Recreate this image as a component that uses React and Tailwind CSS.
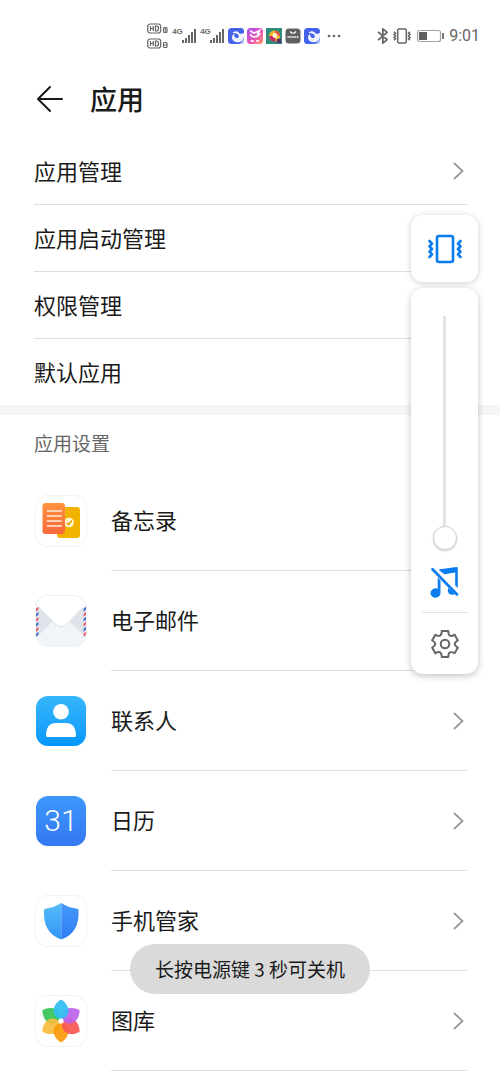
import React from 'react'
import { Bluetooth } from 'lucide-react'

const manageItems = ['应用管理', '应用启动管理', '权限管理', '默认应用']

const Chevron = () => (
  <svg className="mr-0.5 w-3 h-5 shrink-0" viewBox="0 0 12 20" fill="none" stroke="#999" strokeWidth="1.8" aria-hidden="true">
    <path d="M1 2l8.500 8L1 18" />
  </svg>
)

// status bar pieces
const HdBadge = () => (
  <svg className="w-[22px] h-7" viewBox="0 0 22 28" fill="none" stroke="#666" aria-hidden="true">
    {[0, 15].map((y, i) => (
      <g key={y} transform={`translate(1 ${y + 1})`}>
        <rect x="0.7" y="1" width="13" height="9" rx="2.5" strokeWidth="1.2" />
        <path d="M3.5 3v5M6.3 3v5M3.5 5.5h2.8M8.5 3v5h1q2 0 2-2.5t-2-2.5z" strokeWidth="1.2" />
        <rect x="16.5" y="4.500" width="3.5" height="5" rx="1" strokeWidth="1.200" />
        {i === 0 ? <path d="M18.3 5v4" strokeWidth="1" /> : <path d="M16.5 7h3.5" strokeWidth="1" />}
      </g>
    ))}
  </svg>
)

const Signal = () => (
  <div className="flex w-6 h-4 items-start">
    <span className="w-[10px] font-['Liberation_Sans',sans-serif] text-[8px] leading-[8px] font-bold text-[#666]">4G</span>
    <svg className="w-[14px] h-4 shrink-0" viewBox="0 0 14 16" fill="#666" aria-hidden="true">
      <rect x="0" y="12" width="2" height="3" />
      <rect x="3" y="10" width="2" height="5" />
      <rect x="6" y="7" width="2" height="8" />
      <rect x="9" y="4" width="2" height="11" />
      <rect x="12" y="1" width="2" height="14" />
    </svg>
  </div>
)

const BirdApp = () => (
  <svg className="w-4 h-4" viewBox="0 0 16 16" aria-hidden="true">
    <rect width="16" height="16" rx="3.5" fill="#4463ea" />
    <path d="M4.500 5C6 2.800 10 2.600 11.500 5.500c1.500.6 3 .3 4.500-.8V9c-.5 3-2.500 5-5.500 5.300C7 14.500 4 12.500 4 9.500c0-1.700.8-3 2.200-3.500-.2 2 .5 3.500 2.300 4 1.500.3 2.500-.6 2.300-2C10.500 6 7.500 4.800 4.500 5z" fill="#eef3ff" />
    <path d="M16 10v2.500Q16 16 12.500 16H11c2.500-1 4.300-3 5-6z" fill="#c9d5fb" />
  </svg>
)

const StatusApps = () => (
  <div className="flex items-center gap-[3px]">
    <BirdApp />
    <svg className="w-4 h-4" viewBox="0 0 16 16" aria-hidden="true">
      <defs>
        <linearGradient id="pink" x1="0" y1="0" x2="1" y2="1">
          <stop offset="0" stopColor="#a64cf0" />
          <stop offset="0.6" stopColor="#ee56b4" />
          <stop offset="1" stopColor="#ff9a5c" />
        </linearGradient>
      </defs>
      <rect width="16" height="16" rx="3.5" fill="url(#pink)" />
      <path d="M3.500 3l3.500 2.200 5.500-2.700-2 3.500M3.500 6.500C5 10 11 9.500 13 5.500" stroke="#fff" strokeWidth="1.6" fill="none" strokeLinecap="round" />
      <path d="M3.500 13h3.500M9 13h3" stroke="#fff" strokeWidth="1.500" fill="none" />
    </svg>
    <svg className="w-4 h-4" viewBox="0 0 16 16" aria-hidden="true">
      <rect width="16" height="16" fill="#2d8c7c" />
      <circle cx="8.500" cy="8" r="5.500" fill="#f0b92f" />
      <path d="M3 8a5.500 5.500 0 0 0 7 5.300L8.500 8z" fill="#c02a6a" />
      <path d="M9 2.500a5.500 5.500 0 0 1 5 5.500L9 8z" fill="#e8503a" />
      <circle cx="9" cy="7.500" r="2.500" fill="#fff3c9" />
      <path d="M11 11h4v4h-4z" fill="#5c2d6e" />
    </svg>
    <svg className="w-4 h-4" viewBox="0 0 16 16" aria-hidden="true">
      <rect x="0.500" y="0.500" width="15" height="15" rx="3.500" fill="#606060" />
      <path d="M5 3.500q3 3.500 6 0" stroke="#fff" strokeWidth="1.200" fill="none" />
      <path d="M2.500 9h11" stroke="#e5e5e5" strokeWidth="2" strokeDasharray="1.300 .6" />
    </svg>
    <BirdApp />
  </div>
)

const StatusBar = () => (
  <div className="flex h-[60px] items-center justify-end gap-8 pt-3 pr-5">
    <div className="flex items-center gap-1">
      <HdBadge />
      <Signal />
      <Signal />
      <StatusApps />
      <svg className="w-5 h-4" viewBox="0 0 20 16" fill="#666" aria-hidden="true">
        <circle cx="5" cy="8" r="1.300" />
        <circle cx="10" cy="8" r="1.300" />
        <circle cx="15" cy="8" r="1.300" />
      </svg>
    </div>
    <div className="flex items-center gap-1">
      <Bluetooth className="w-3 h-4 text-[#666]" viewBox="4 1 14 22" strokeWidth={2} preserveAspectRatio="none" aria-hidden="true" />
      <svg className="w-5 h-4" viewBox="0 0 36 30" fill="none" stroke="#666" strokeWidth="2.800" aria-hidden="true">
        <rect x="10" y="2" width="16" height="26" rx="2" />
        <path d="M3 7l3 2.700-3 2.700 3 2.600-3 2.700 3 2.600-3 2.700M33 7l-3 2.700 3 2.700-3 2.600 3 2.700-3 2.600 3 2.700" />
      </svg>
      <svg className="w-[29px] h-4" viewBox="2 0 29 16" aria-hidden="true">
        <rect x="3.500" y="2.500" width="23" height="11" rx="2" fill="none" stroke="#a3a3a3" strokeWidth="1.200" />
        <rect x="5" y="4" width="8" height="8" fill="#606060" />
        <rect x="28" y="5" width="2" height="6" fill="#777" />
      </svg>
      <span className="font-['Roboto',sans-serif] text-base leading-5 text-[#666]">9:01</span>
    </div>
  </div>
)

// app icons, all drawn on a 50x50 tile
const NotesIcon = () => (
  <svg className="w-full h-full" viewBox="0 0 50 50" aria-hidden="true">
    <defs>
      <linearGradient id="notes" x1="0" y1="0" x2="0" y2="1">
        <stop offset="0" stopColor="#ff9440" />
        <stop offset="1" stopColor="#f9683a" />
      </linearGradient>
    </defs>
    <rect x="21" y="11" width="23" height="31" rx="3" fill="#f2b300" />
    <circle cx="33" cy="26.500" r="4.800" fill="#fff6d8" />
    <path d="M30.800 26.700l1.800 1.900 3.300-4" stroke="#e8a400" strokeWidth="1.500" fill="none" />
    <rect x="6.500" y="7" width="22.500" height="31" rx="3" fill="url(#notes)" />
    <path d="M11.300 15h14M11.300 20h14M11.300 25h14M11.300 30h14" stroke="#ffe9da" strokeWidth="1.500" strokeLinecap="round" />
  </svg>
)

const MailIcon = () => (
  <svg className="w-full h-full" viewBox="0 0 50 50" aria-hidden="true">
    <rect width="50" height="50" fill="#dfe4eb" />
    <path d="M0 42L17 25h16l17 17v8H0z" fill="#f1f5f9" />
    <path d="M0 0h50v8.500L30 29q-5 4.500-10 0L0 8.500z" fill="#dce1e8" />
    <path d="M0 0h50v8L30 28q-5 4.500-10 0L0 8z" fill="#fff" />
    <rect y="10" width="2.500" height="30" fill="#fff" />
    <rect x="47.500" y="10" width="2.500" height="30" fill="#fff" />
    {[11, 21, 31].map((y) => (
      <g key={y}>
        <path d={`M0 ${y + 1.5}l2.500-2v3.500l-2.500 2z`} fill="#e26a7c" />
        <path d={`M0 ${y + 6.500}l2.500-2v3.500l-2.500 2z`} fill="#4f76cf" />
        <path d={`M47.500 ${y + 1.5}l2.500-2v3.500l-2.500 2z`} fill="#4f76cf" />
        <path d={`M47.500 ${y + 6.500}l2.500-2v3.500l-2.500 2z`} fill="#e26a7c" />
      </g>
    ))}
  </svg>
)

const ContactsIcon = () => (
  <svg className="w-full h-full" viewBox="0 0 50 50" fill="#fff" aria-hidden="true">
    <circle cx="25" cy="15.800" r="7.800" />
    <path d="M10 39.500C10 31 14 27 20 27h10c6 0 10 4 10 12.500q0 1.500-1.500 1.500h-27Q10 41 10 39.500z" />
  </svg>
)

const ShieldIcon = () => (
  <svg className="w-full h-full" viewBox="0 0 50 50" aria-hidden="true">
    <defs>
      <linearGradient id="shieldL" x1="0" y1="0" x2="0" y2="1">
        <stop offset="0" stopColor="#55bcf8" />
        <stop offset="1" stopColor="#3296f6" />
      </linearGradient>
      <linearGradient id="shieldR" x1="0" y1="0" x2="0" y2="1">
        <stop offset="0" stopColor="#4698f6" />
        <stop offset="1" stopColor="#2f7df6" />
      </linearGradient>
    </defs>
    <path d="M25.300 7Q17 12 9.300 12.700 8 13 8 14.500C7.500 29 12 38.500 25.300 43.500z" fill="url(#shieldL)" />
    <path d="M25.300 7Q33 12 41.300 12.700q1.300.3 1.300 1.800C43 29 38.500 38.500 25.300 43.500z" fill="url(#shieldR)" />
  </svg>
)

const petals = [
  [300, '#36c35a'],
  [240, '#f7bd3f'],
  [180, '#fb9a0c'],
  [120, '#f9564f'],
  [60, '#bb62ea'],
  [0, '#30bdf2'],
]

const GalleryIcon = () => (
  <svg className="w-full h-full" viewBox="0 0 50 50" aria-hidden="true">
    {petals.map(([angle, color]) => (
      <path
        key={angle}
        transform={`translate(25 25) rotate(${angle})`}
        d="M0-21.500C4.500-19 7.500-14.500 7.500-10.500 7.500-5.500 3.500-2 0-2S-7.500-5.500-7.500-10.500C-7.500-14.500-4.500-19 0-21.500z"
        fill={color}
        fillOpacity="0.92"
      />
    ))}
    <circle cx="25" cy="25" r="2.600" fill="#fff" />
  </svg>
)

const apps = [
  { name: '备忘录', tile: 'bg-white ring-1 ring-[#f3f3f3]', icon: <NotesIcon /> },
  { name: '电子邮件', tile: 'bg-white ring-1 ring-[#f3f3f3]', icon: <MailIcon /> },
  { name: '联系人', tile: 'bg-linear-to-b from-[#35b6fb] to-[#0397fb]', icon: <ContactsIcon /> },
  {
    name: '日历',
    tile: 'bg-linear-to-b from-[#3d97fa] to-[#3577f3]',
    icon: <span className="font-['Roboto',sans-serif] text-3xl font-light text-white">31</span>,
  },
  { name: '手机管家', tile: 'bg-white ring-1 ring-[#f3f3f3]', icon: <ShieldIcon /> },
  { name: '图库', tile: 'bg-white ring-1 ring-[#f3f3f3]', icon: <GalleryIcon /> },
]

const GearIcon = () => (
  <svg className="block size-[30px]" viewBox="-15 -15 30 30" fill="none" stroke="#666" strokeWidth="2" strokeLinecap="round" strokeLinejoin="round" aria-hidden="true">
    {[0, 60, 120, 180, 240, 300].map((angle) => (
      <path key={angle} transform={`rotate(${angle})`} d="M-3.200-12.900H3.200C3.500-8 5.200-7 9.600-9.200" />
    ))}
    <circle r="4.300" />
  </svg>
)

const VolumePanel = () => (
  <aside className="absolute top-[215px] right-[22px] flex w-[67px] flex-col gap-1.5">
    <button
      type="button"
      aria-label="振动"
      className="flex h-[67px] items-center justify-center rounded-xl bg-white shadow-[0_1px_6px_rgba(0,0,0,0.2)]"
    >
      <svg className="w-9 h-[30px]" viewBox="0 0 36 30" fill="none" stroke="#0a7cf0" strokeWidth="2.600" strokeLinejoin="round" strokeLinecap="round" aria-hidden="true">
        <rect x="10" y="2" width="16" height="26" rx="2" />
        <path d="M2.500 7l2.500 2.700-2.500 2.700 2.500 2.600-2.500 2.700 2.500 2.600-2.500 2.700M33.500 7l-2.500 2.700 2.500 2.700-2.500 2.600 2.500 2.700-2.500 2.600 2.500 2.700" />
      </svg>
    </button>
    <div className="flex flex-col items-center gap-4 rounded-xl bg-white pt-7 pb-[15px] shadow-[0_2px_7px_rgba(0,0,0,0.24)]">
      <input
        type="range"
        min="0"
        max="100"
        defaultValue="0"
        aria-label="媒体音量"
        className="m-0 h-[234px] w-6 appearance-none bg-[linear-gradient(#e4e4e4,#e4e4e4)] bg-[length:3px_100%] bg-center bg-no-repeat [writing-mode:vertical-lr] [direction:rtl] [&::-webkit-slider-thumb]:size-6 [&::-webkit-slider-thumb]:appearance-none [&::-webkit-slider-thumb]:rounded-full [&::-webkit-slider-thumb]:border [&::-webkit-slider-thumb]:border-[#d2d2d2] [&::-webkit-slider-thumb]:bg-white [&::-webkit-slider-thumb]:shadow-[0_1px_2px_rgba(0,0,0,0.2)]"
      />
      <button type="button" aria-label="静音">
        <svg className="block size-[30px] overflow-visible" viewBox="0 0 30 30" fill="#0a7cf0" aria-hidden="true">
          <path d="M9 4.200Q9 3.500 10 3.300L26.500 1q1.300-.1 1.300 1.200V22L25.200 19.400V6.500L14.500 8.200z" />
          <path d="M7.700 11.500l2.800 2.900V27a5 4.700 0 1 1-2.800-4.200z" />
          <path d="M18.500 22l6.500 6.300q-3.800 1.200-6-.8-2.200-2.500-.5-5.500z" />
          <path d="M2.500 3.300l24.500 25.200" stroke="#0a7cf0" strokeWidth="2.700" strokeLinecap="round" />
        </svg>
      </button>
      <div className="h-px w-[46px] bg-[#e2e2e2]" />
      <button type="button" aria-label="设置">
        <GearIcon />
      </button>
    </div>
  </aside>
)

const App = () => {
  return (
    <div className="relative min-h-screen bg-white font-['Noto_Sans_CJK_SC',sans-serif] text-[#1a1a1a]">
      <StatusBar />

      <header className="flex h-[78px] items-center gap-[26px] pl-9">
        <button type="button" aria-label="返回">
          <svg className="block size-7" viewBox="0 0 28 28" fill="none" stroke="#1a1a1a" strokeWidth="2" strokeLinecap="round" strokeLinejoin="round" aria-hidden="true">
            <path d="M26 14H2M14 2L2 14l12 12" />
          </svg>
        </button>
        <h1 className="text-[27px] leading-9 font-medium">应用</h1>
      </header>

      <main>
        <nav className="pr-[33px] pl-[34px]">
          {manageItems.map((label) => (
            <a
              key={label}
              href="#"
              className="flex h-[67px] items-center justify-between border-b border-[#dedede] text-[22px] leading-8 last:h-[66px] last:border-b-0"
            >
              <span className="pb-[3px]">{label}</span>
              <Chevron />
            </a>
          ))}
        </nav>

        <div className="h-2.5 bg-[#f5f5f5]" />

        <section>
          <h2 className="flex h-14 items-center pl-[34px] text-[19px] leading-7 text-[#666]">应用设置</h2>
          {apps.map(({ name, tile, icon }) => (
            <a key={name} href="#" className="flex h-[100px] items-center gap-[25px] pr-[33px] pl-9">
              <span className={`flex size-[50px] shrink-0 items-center justify-center overflow-hidden rounded-xl ${tile}`}>
                {icon}
              </span>
              <span className="flex h-full flex-1 items-center justify-between border-b border-[#dedede] text-[22px] leading-8">
                <span className="pb-[3px]">{name}</span>
                <Chevron />
              </span>
            </a>
          ))}
        </section>
      </main>

      <VolumePanel />

      {/* 电源键提示 */}
      <div role="status" className="fixed bottom-[89px] left-1/2 flex h-[50px] w-60 -translate-x-1/2 items-center justify-center rounded-full bg-[#dadada] text-[19px] leading-7 whitespace-nowrap">
        长按电源键 3 秒可关机
      </div>
    </div>
  )
}

export default App
